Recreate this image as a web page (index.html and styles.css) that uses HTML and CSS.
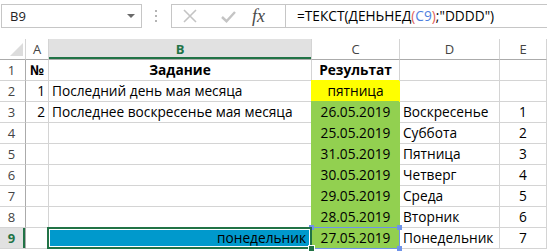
FILE: index.html
```html
<!DOCTYPE html>
<html lang="ru">
<head>
<meta charset="utf-8">
<title>Excel</title>
<link rel="stylesheet" href="styles.css">
</head>
<body>
<div class="fbar">
  <div class="namebox"><span class="nb-text">B9</span><span class="dd"></span></div>
  <div class="sep"><span></span><span></span><span></span></div>
  <div class="fxgroup">
    <div class="fxicons">
      <svg class="ic-x" width="14" height="14" viewBox="0 0 14 14"><path d="M1 1 L13 13 M13 1 L1 13" stroke="#c4c4c4" stroke-width="1.6" fill="none"/></svg>
      <svg class="ic-ok" width="15" height="13" viewBox="0 0 15 13"><path d="M1 7 L5.5 11.2 L14 2" stroke="#c4c4c4" stroke-width="2.4" fill="none"/></svg>
      <span class="ic-fx">fx</span>
    </div>
    <div class="formula">=ТЕКСТ(ДЕНЬНЕД<span class="paren">(</span><span class="ref">C9</span><span class="paren">)</span>;"DDDD")</div>
  </div>
</div>
<div class="sheet">
  <div class="grid">
    <div class="corner"><span class="tri"></span></div>
    <div class="ch">A</div>
    <div class="ch sel">B</div>
    <div class="ch">C</div>
    <div class="ch">D</div>
    <div class="ch">E</div>

    <div class="rh">1</div>
    <div class="c b ctr">№</div>
    <div class="c b ctr">Задание</div>
    <div class="c b ctr">Результат</div>
    <div class="c"></div>
    <div class="c"></div>

    <div class="rh">2</div>
    <div class="c r">1</div>
    <div class="c">Последний день мая месяца</div>
    <div class="c ctr yel">пятница</div>
    <div class="c"></div>
    <div class="c"></div>

    <div class="rh">3</div>
    <div class="c r">2</div>
    <div class="c">Последнее воскресенье мая месяца</div>
    <div class="c ctr grn">26.05.2019</div>
    <div class="c">Воскресенье</div>
    <div class="c ctr">1</div>

    <div class="rh">4</div>
    <div class="c"></div>
    <div class="c"></div>
    <div class="c ctr grn">25.05.2019</div>
    <div class="c">Суббота</div>
    <div class="c ctr">2</div>

    <div class="rh">5</div>
    <div class="c"></div>
    <div class="c"></div>
    <div class="c ctr grn">31.05.2019</div>
    <div class="c">Пятница</div>
    <div class="c ctr">3</div>

    <div class="rh">6</div>
    <div class="c"></div>
    <div class="c"></div>
    <div class="c ctr grn">30.05.2019</div>
    <div class="c">Четверг</div>
    <div class="c ctr">4</div>

    <div class="rh">7</div>
    <div class="c"></div>
    <div class="c"></div>
    <div class="c ctr grn">29.05.2019</div>
    <div class="c">Среда</div>
    <div class="c ctr">5</div>

    <div class="rh">8</div>
    <div class="c"></div>
    <div class="c"></div>
    <div class="c ctr grn">28.05.2019</div>
    <div class="c">Вторник</div>
    <div class="c ctr">6</div>

    <div class="rh sel">9</div>
    <div class="c"></div>
    <div class="c r blu">понедельник</div>
    <div class="c ctr grn">27.05.2019</div>
    <div class="c">Понедельник</div>
    <div class="c ctr">7</div>
  </div>
  <div class="refbox"><i class="h tl"></i><i class="h tr"></i><i class="h bl"></i><i class="h br"></i></div>
  <div class="selbox"></div>
  <div class="fillhandle"></div>
</div>
</body>
</html>
```

FILE: styles.css
```css
html, body {
  margin: 0;
  padding: 0;
  background: #ffffff;
}
body {
  width: 547px;
  height: 251px;
  overflow: hidden;
  font-family: "Open Sans", "Liberation Sans", sans-serif;
  color: #000;
}

/* formula bar */
.fbar {
  height: 39px;
  box-sizing: border-box;
  padding-top: 4px;
  display: flex;
  align-items: flex-start;
}
.namebox {
  margin-left: 1px;
  width: 141px;
  height: 24px;
  box-sizing: border-box;
  border: 1px solid #c6c6c6;
  display: flex;
  align-items: center;
  padding-left: 8px;
  font-size: 13px;
  color: #222;
}
.dd {
  margin-left: auto;
  margin-right: 6px;
  width: 0;
  height: 0;
  border-left: 4px solid transparent;
  border-right: 4px solid transparent;
  border-top: 4px solid #6a6a6a;
}
.sep {
  width: 29px;
  height: 24px;
  display: flex;
  flex-direction: column;
  align-items: center;
  justify-content: center;
  gap: 3px;
  padding-right: 2px;
  box-sizing: border-box;
}
.sep span {
  width: 2px;
  height: 2px;
  background: #b4b4b4;
}
.fxgroup {
  flex: 1;
  height: 24px;
  box-sizing: border-box;
  border: 1px solid #c6c6c6;
  border-right: none;
  display: flex;
}
.fxicons {
  width: 113px;
  display: flex;
  align-items: center;
  padding-left: 11px;
  box-sizing: border-box;
}
.ic-ok {
  margin-left: 24px;
}
.ic-fx {
  margin-left: 16px;
  font-family: "Liberation Serif", "DejaVu Serif", serif;
  font-style: italic;
  font-size: 18px;
  color: #4a4a4a;
  line-height: 22px;
}
.formula {
  flex: 1;
  border-left: 1px solid #c6c6c6;
  padding-left: 11px;
  font-size: 13.7px;
  line-height: 22px;
  white-space: nowrap;
  color: #000;
}
.paren { color: #e0605a; }
.ref { color: #4f7fe0; }

/* sheet */
.sheet {
  position: relative;
}
.grid {
  display: grid;
  grid-template-columns: 26px 23px 263px 88px 100px 47px;
  grid-template-rows: repeat(10, 21px);
}
.grid > div {
  box-sizing: border-box;
  border-right: 1px solid #d4d4d4;
  border-bottom: 1px solid #d4d4d4;
  white-space: nowrap;
  overflow: visible;
}
.corner {
  display: flex;
  align-items: flex-end;
  justify-content: flex-end;
  padding: 0 2px 3px 0;
  border-bottom-color: #ababab !important;
  border-right-color: #d4d4d4;
}
.tri {
  width: 0;
  height: 0;
  border-left: 13px solid transparent;
  border-bottom: 13px solid #dcdcdc;
}
.ch {
  font-size: 13px;
  color: #444;
  text-align: center;
  line-height: 21px;
  border-bottom-color: #ababab !important;
}
.ch.sel {
  background: #e1e1e1;
  color: #217346;
  font-weight: 700;
  box-shadow: inset 0 -2px 0 #217346;
}
.rh {
  font-size: 13px;
  color: #444;
  text-align: center;
  line-height: 20px;
  border-right-color: #ababab !important;
  padding-right: 2px;
}
.rh.sel {
  background: #e1e1e1;
  color: #217346;
  font-weight: 700;
  box-shadow: inset -2px 0 0 #217346;
}
.c {
  font-size: 13.7px;
  line-height: 20px;
  padding: 0 3px;
}
.b { font-weight: 700; }
.ctr { text-align: center; }
.r { text-align: right; }
.yel {
  background: #ffff00;
  border-color: #ffff00 !important;
  box-shadow: -1px -1px 0 #ffff00;
}
.grn {
  background: #92d050;
  border-color: #92d050 !important;
  box-shadow: -1px -1px 0 #92d050;
}
.blu {
  background: #0099cc;
  padding-right: 5px;
}

/* overlays */
.selbox {
  position: absolute;
  left: 47px;
  top: 188px;
  width: 265px;
  height: 22px;
  box-sizing: border-box;
  border: 2px solid #217346;
  box-shadow: inset 0 0 0 1px #ffffff;
}
.fillhandle {
  position: absolute;
  left: 308px;
  top: 206px;
  width: 5px;
  height: 5px;
  background: #217346;
  border: 1px solid #ffffff;
}
.refbox {
  position: absolute;
  left: 311px;
  top: 188px;
  width: 89px;
  height: 22px;
  box-sizing: border-box;
  border: 1px solid #6f93e8;
}
.h {
  position: absolute;
  width: 5px;
  height: 5px;
  background: #6f93e8;
}
.tl { left: -3px; top: -3px; }
.tr { right: -3px; top: -3px; }
.bl { left: -3px; bottom: -3px; }
.br { right: -3px; bottom: -3px; }
```
